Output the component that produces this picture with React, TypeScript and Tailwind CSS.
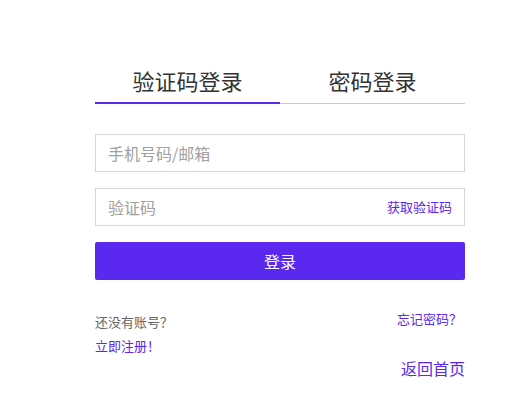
import { useState } from 'react'

const font = { fontFamily: '"Noto Sans CJK SC", "Noto Sans", sans-serif' }

export default function App() {
  const [tab, setTab] = useState<'code' | 'password'>('code')

  return (
    <div className="min-h-screen bg-white" style={font}>
      <div className="ml-[95px] w-[370px] pt-[59px]">
        {/* Tabs */}
        <div className="flex border-b border-[#cccccc]">
          <button
            onClick={() => setTab('code')}
            className={`flex-1 h-[45px] -mb-px flex items-center justify-center text-[22px] text-[#333] ${
              tab === 'code' ? 'border-b-2 border-[#5a28ee]' : 'border-b-2 border-transparent'
            }`}
          >
            验证码登录
          </button>
          <button
            onClick={() => setTab('password')}
            className={`flex-1 h-[45px] -mb-px flex items-center justify-center text-[22px] text-[#333] ${
              tab === 'password' ? 'border-b-2 border-[#5a28ee]' : 'border-b-2 border-transparent'
            }`}
          >
            密码登录
          </button>
        </div>

        <form className="mt-[30px] flex flex-col gap-4" onSubmit={(e) => e.preventDefault()}>
          <input
            type="text"
            placeholder="手机号码/邮箱"
            className="h-[38px] w-full border border-[#d3d6dd] px-[12px] text-[16px] text-[#333] placeholder-[#a0a0a0] outline-none"
          />
          <div className="flex h-[38px] items-center border border-[#d3d6dd]">
            <input
              type="text"
              placeholder="验证码"
              className="h-full min-w-0 flex-1 px-[12px] text-[16px] text-[#333] placeholder-[#a0a0a0] outline-none"
            />
            <button type="button" className="pr-[12px] text-[13px] text-[#5a28ee]">
              获取验证码
            </button>
          </div>
          <button
            type="submit"
            className="h-[38px] w-full rounded-[2px] bg-[#5a28ee] text-[16px] text-white"
          >
            登录
          </button>
        </form>

        <div className="mt-[30px] flex justify-between">
          <div className="text-[13px] leading-[24px]">
            <p className="text-[#666]">还没有账号？</p>
            <a href="#" className="text-[#5a28ee]">立即注册！</a>
          </div>
          <a href="#" className="pr-[3px] text-[13px] leading-[18px] text-[#5a28ee]">
            忘记密码？
          </a>
        </div>

        <div className="flex justify-end">
          <a href="#" className="text-[16px] leading-[20px] text-[#5a28ee]">
            返回首页
          </a>
        </div>
      </div>
    </div>
  )
}
